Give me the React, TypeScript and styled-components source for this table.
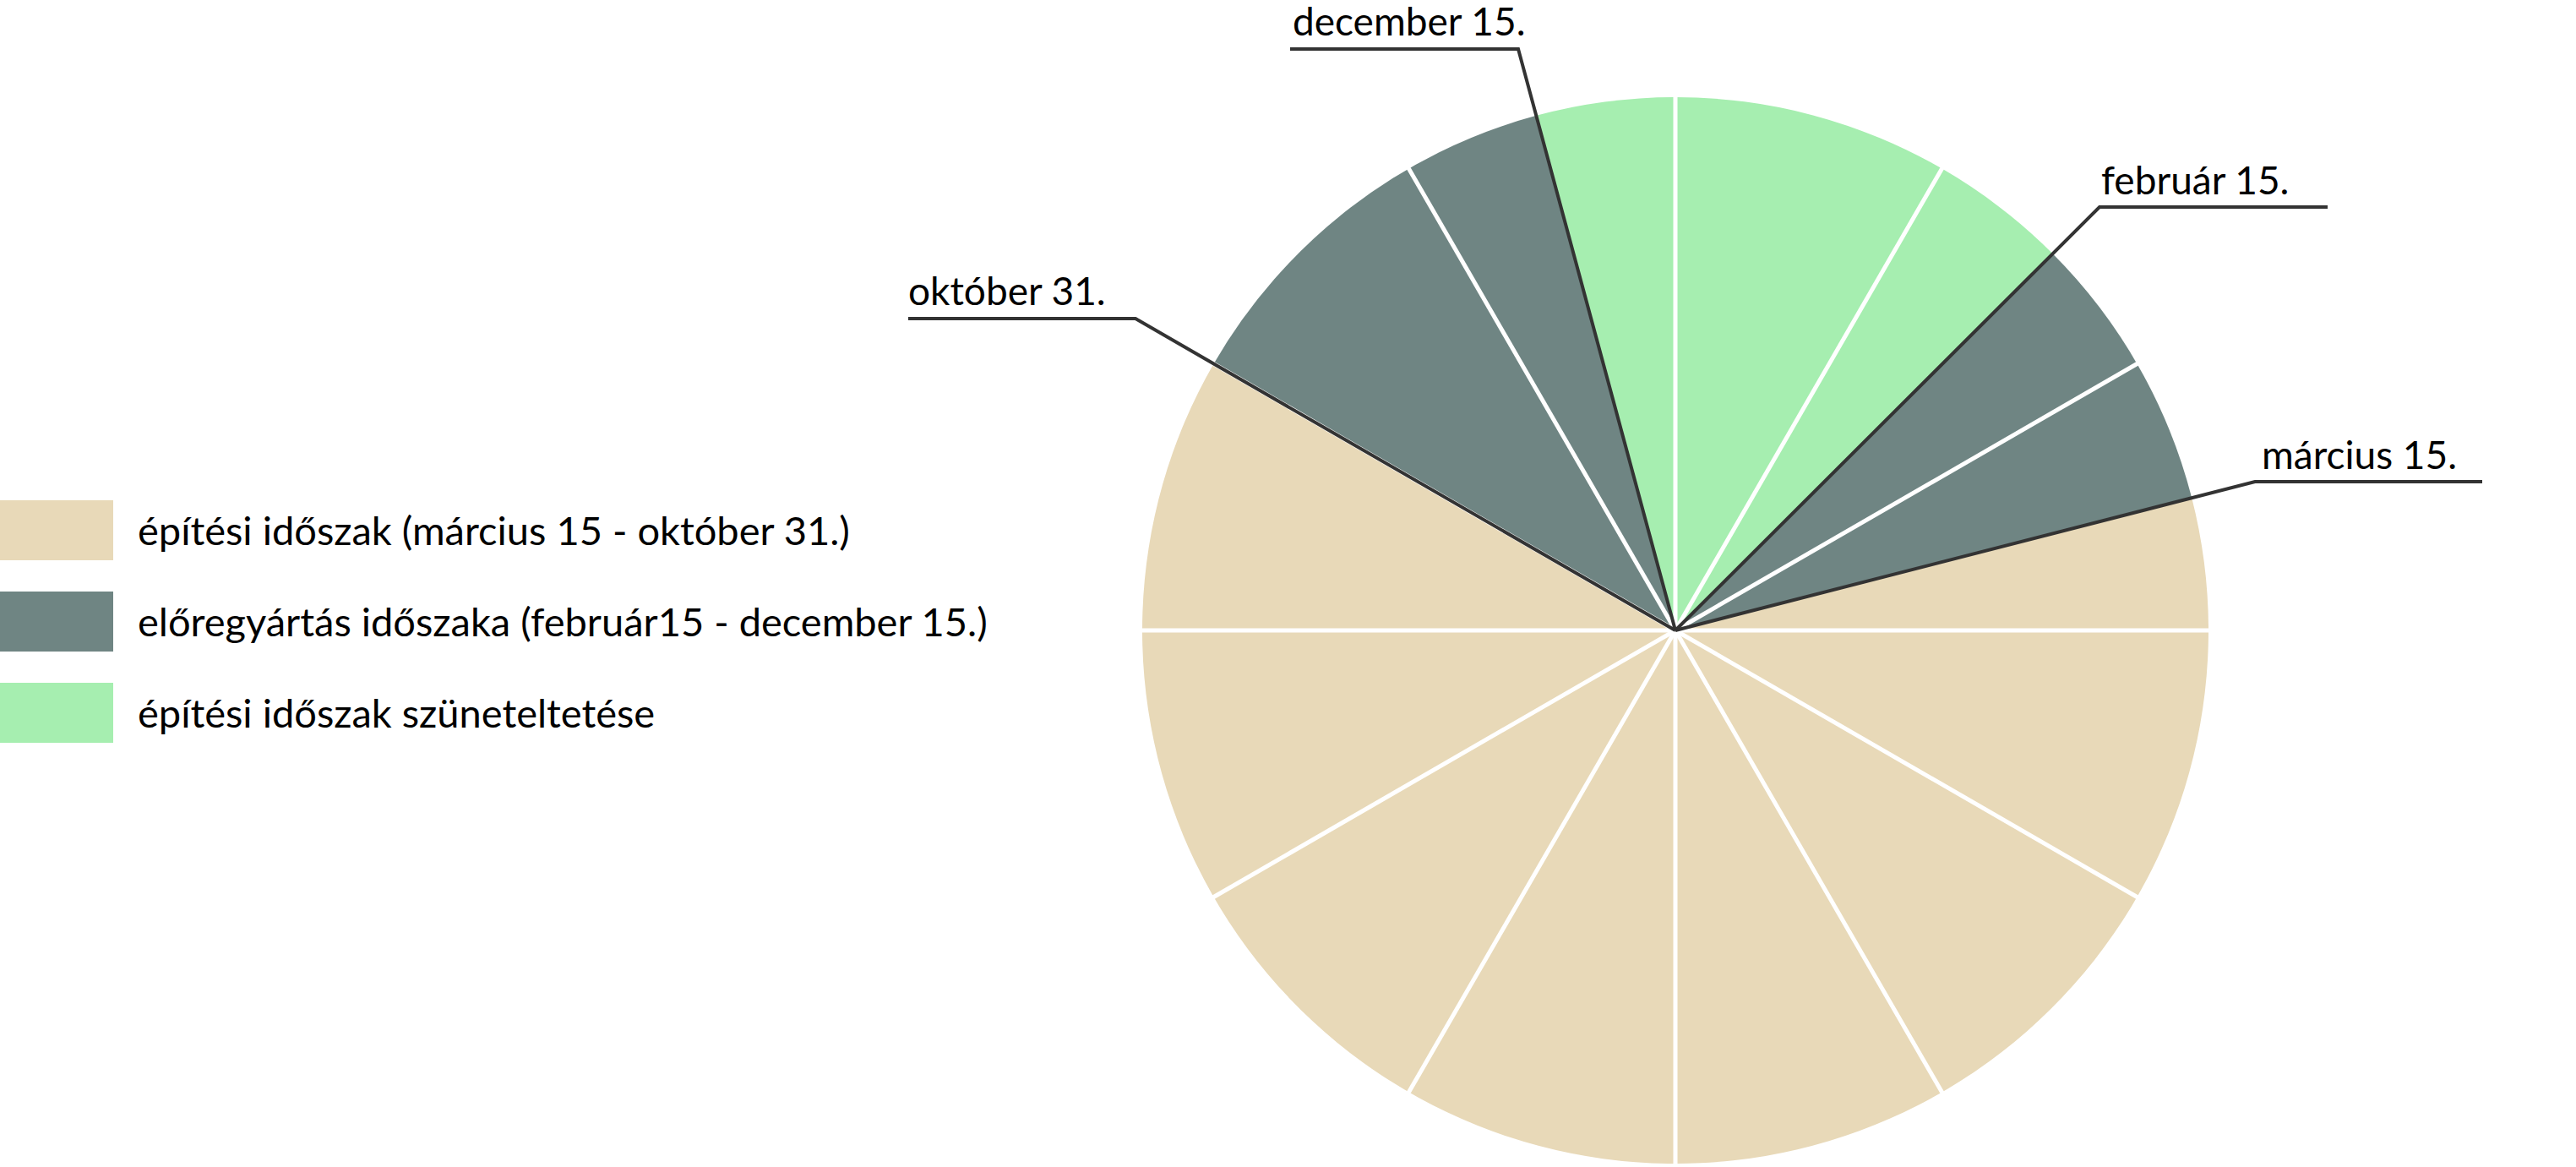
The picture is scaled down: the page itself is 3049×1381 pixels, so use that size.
import styled, { createGlobalStyle } from 'styled-components';

const COLORS = {
  build: '#e8d9b8',
  prefab: '#6f8583',
  pause: '#a6eeb0',
  leader: '#333333',
};

const CX = 1983;
const CY = 746;
const R = 631;

const GlobalStyle = createGlobalStyle`
  html, body {
    margin: 0;
    padding: 0;
    background: #ffffff;
  }
  body {
    font-family: Lato, "Open Sans", sans-serif;
    overflow: hidden;
  }
`;

const legendItems = [
  { color: COLORS.build, text: 'építési időszak (március 15 - október 31.)' },
  { color: COLORS.prefab, text: 'előregyártás időszaka (február15 - december 15.)' },
  { color: COLORS.pause, text: 'építési időszak szüneteltetése' },
];

// angles measured clockwise from 12 o'clock
const wedges = [
  { from: 344.87, to: 405.06, color: COLORS.pause },
  { from: 45.06, to: 75.6, color: COLORS.prefab },
  { from: 75.6, to: 300, color: COLORS.build },
  { from: 300, to: 344.87, color: COLORS.prefab },
];

const labels = [
  { text: 'december 15.', x: 1530, y: 42, line: '1527,58 1797,58 1983,746' },
  { text: 'október 31.', x: 1075, y: 361, line: '1075,377 1344,377 1983,746' },
  { text: 'február 15.', x: 2487, y: 230, line: '2755,245 2485,245 1983,746' },
  { text: 'március 15.', x: 2677, y: 555, line: '2938,570 2669,570 1983,746' },
];

const point = (deg: number, r = R) => {
  const a = (deg * Math.PI) / 180;
  return [CX + r * Math.sin(a), CY - r * Math.cos(a)];
};

const wedgePath = (from: number, to: number) => {
  const [x1, y1] = point(from);
  const [x2, y2] = point(to);
  const large = to - from > 180 ? 1 : 0;
  return `M ${CX} ${CY} L ${x1} ${y1} A ${R} ${R} 0 ${large} 1 ${x2} ${y2} Z`;
};

const App = () => {
  return (
    <>
      <GlobalStyle />
      <Page>
        <Legend>
          {legendItems.map((item) => (
            <LegendRow key={item.text}>
              <Swatch $color={item.color} />
              <LegendLabel>{item.text}</LegendLabel>
            </LegendRow>
          ))}
        </Legend>
        <Chart viewBox="1060 0 1989 1381">
          {wedges.map((w) => (
            <path key={w.from} d={wedgePath(w.from, w.to)} fill={w.color} />
          ))}
          {Array.from({ length: 12 }, (_, i) => {
            const [x, y] = point(i * 30, R + 1);
            return <MonthLine key={i} x1={CX} y1={CY} x2={x} y2={y} />;
          })}
          {labels.map((l) => (
            <g key={l.text}>
              <Leader points={l.line} />
              <ChartLabel x={l.x} y={l.y}>
                {l.text}
              </ChartLabel>
            </g>
          ))}
        </Chart>
      </Page>
    </>
  );
};

export default App;

const Page = styled.div`
  display: grid;
  grid-template-columns: 1060px 1989px;
  width: 3049px;
  height: 1381px;
`;

const Legend = styled.div`
  display: flex;
  flex-direction: column;
  gap: 37px;
  padding-top: 592px;
`;

const LegendRow = styled.div`
  display: flex;
  align-items: center;
  gap: 29px;
  height: 71px;
`;

const Swatch = styled.div<{ $color: string }>`
  flex: none;
  width: 134px;
  height: 71px;
  background-color: ${(props) => props.$color};
`;

const LegendLabel = styled.span`
  font-size: 47px;
  line-height: 71px;
  color: #000000;
  white-space: nowrap;
`;

const Chart = styled.svg`
  display: block;
  width: 1989px;
  height: 1381px;
  overflow: visible;
`;

const MonthLine = styled.line`
  stroke: #ffffff;
  stroke-width: 5;
`;

const Leader = styled.polyline`
  fill: none;
  stroke: ${COLORS.leader};
  stroke-width: 4;
  stroke-linejoin: miter;
`;

const ChartLabel = styled.text`
  font-family: Lato, "Open Sans", sans-serif;
  font-size: 46px;
  fill: #000000;
`;
